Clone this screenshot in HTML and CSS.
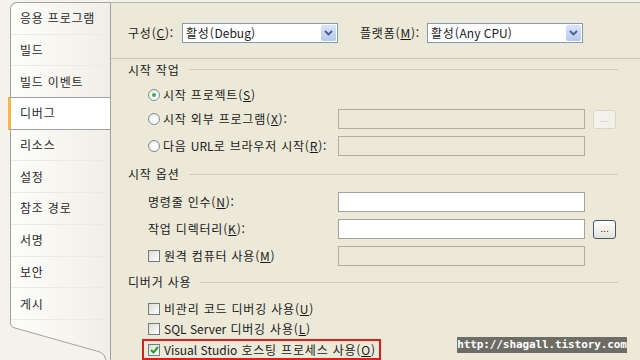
FILE: index.html
```html
<!DOCTYPE html>
<html lang="ko">
<head>
<meta charset="utf-8">
<title>디버그 속성</title>
<link rel="stylesheet" href="styles.css">
</head>
<body>
<div class="screen">
  <nav class="tabs">
    <ul class="tab-list">
      <li class="tab">응용 프로그램</li>
      <li class="tab">빌드</li>
      <li class="tab">빌드 이벤트</li>
      <li class="tab active">디버그</li>
      <li class="tab">리소스</li>
      <li class="tab">설정</li>
      <li class="tab">참조 경로</li>
      <li class="tab">서명</li>
      <li class="tab">보안</li>
      <li class="tab">게시</li>
    </ul>
    <svg class="tab-end" width="100" height="40" viewBox="0 0 100 40">
      <defs>
        <linearGradient id="tg" x1="0" y1="0" x2="1" y2="0">
          <stop offset="0" stop-color="#fdfdfb"/>
          <stop offset="1" stop-color="#f0eee6"/>
        </linearGradient>
      </defs>
      <path d="M0 0 H100 V40 H96 Q95 34 90 32 L5 8 Q0.5 7 0.5 3 Z" fill="url(#tg)"/>
      <path d="M0.5 0 V3 Q0.5 7 5 8 L90 32 Q95 34 96 40" fill="none" stroke="#a3a3a0" stroke-width="1"/>
    </svg>
  </nav>
  <main class="panel">
    <div class="config-row">
      <span class="cfg-label">구성(<u>C</u>):</span>
      <div class="combo"><span>활성(<span class="lat">Debug</span>)</span><span class="drop"><svg width="9" height="6" viewBox="0 0 9 6"><path d="M1 1 L4.5 4.5 L8 1" fill="none" stroke="#4a5d86" stroke-width="1.8"/></svg></span></div>
      <span class="cfg-label plat">플랫폼(<u>M</u>):</span>
      <div class="combo"><span>활성(<span class="lat">Any CPU</span>)</span><span class="drop"><svg width="9" height="6" viewBox="0 0 9 6"><path d="M1 1 L4.5 4.5 L8 1" fill="none" stroke="#4a5d86" stroke-width="1.8"/></svg></span></div>
    </div>
    <div class="sep"></div>

    <div class="group g1"><span>시작 작업</span><span class="rule"></span></div>
    <div class="row r-start"><span class="radio on"></span><span>시작 프로젝트(<u>S</u>)</span></div>
    <div class="row r-ext">
      <span class="lab"><span class="radio"></span><span>시작 외부 프로그램(<u>X</u>):</span></span>
      <span class="field off"></span><span class="dots off">...</span>
    </div>
    <div class="row r-url">
      <span class="lab"><span class="radio"></span><span>다음 <span class="lat">URL</span>로 브라우저 시작(<u>R</u>):</span></span>
      <span class="field off"></span>
    </div>

    <div class="group g2"><span>시작 옵션</span><span class="rule"></span></div>
    <div class="row r-args">
      <span class="lab">명령줄 인수(<u>N</u>):</span>
      <span class="field"></span>
    </div>
    <div class="row r-dir">
      <span class="lab">작업 디렉터리(<u>K</u>):</span>
      <span class="field"></span><span class="dots">...</span>
    </div>
    <div class="row r-remote">
      <span class="lab"><span class="check"></span><span>원격 컴퓨터 사용(<u>M</u>)</span></span>
      <span class="field off"></span>
    </div>

    <div class="group g3"><span>디버거 사용</span><span class="rule"></span></div>
    <div class="row r-cb1"><span class="check"></span><span>비관리 코드 디버깅 사용(<u>U</u>)</span></div>
    <div class="row r-cb2"><span class="check"></span><span><span class="lat">SQL Server</span> 디버깅 사용(<u>L</u>)</span></div>
    <div class="hilite">
      <span class="check on"><svg width="9" height="8" viewBox="0 0 9 8"><path d="M1 4 L3.5 6.5 L8 1" fill="none" stroke="#21a121" stroke-width="2"/></svg></span>
      <span><span class="lat">Visual Studio</span> 호스팅 프로세스 사용(<u>O</u>)</span>
    </div>
  </main>
  <div class="watermark">http://shagall.tistory.com</div>
</div>
</body>
</html>
```
FILE: styles.css
```css
html, body {
  margin: 0;
  padding: 0;
}
body {
  width: 640px;
  height: 360px;
  overflow: hidden;
  background: #f4f2ea;
  font-family: "Noto Sans CJK KR", "Noto Sans", sans-serif;
  font-size: 12px;
  color: #1a1a1a;
  letter-spacing: 0.8px;
}
u { text-decoration: underline; text-underline-offset: 1px; }
.lat { letter-spacing: 0; }

.screen {
  position: relative;
  display: flex;
  height: 360px;
  padding-top: 2px;
  box-sizing: border-box;
}

/* left tab strip */
.tabs {
  width: 100px;
  margin-left: 10px;
  display: flex;
  flex-direction: column;
}
.tab-list {
  list-style: none;
  margin: 0;
  padding: 0;
  background: linear-gradient(to right, #fdfdfb, #f0eee6);
  border-left: 1px solid #a3a3a0;
  border-top: 1px solid #a3a3a0;
  border-top-left-radius: 7px;
}
.tab {
  height: 31.7px;
  box-sizing: border-box;
  display: flex;
  align-items: center;
  padding-left: 9px;
  border-bottom: 1px solid #eceae2;
  line-height: 14px;
  color: #2a2a2a;
}
.tab.active {
  background: #fff;
  border-top: 1px solid #a0a0a0;
  border-bottom: 1px solid #a0a0a0;
  border-left: 3px solid #f2b84c;
  margin-left: -3px;
  margin-top: -1px;
  height: 32.7px;
  padding-left: 9px;
}
.tab-end { display: block; }

/* main panel */
.panel {
  flex: 1;
  background: #ece9d8;
  border-left: 1px solid #a0a0a0;
  border-top: 1px solid #b4b4b0;
  padding: 0 22px 0 17px;
  display: flex;
  flex-direction: column;
  align-items: flex-start;
}
.config-row {
  margin-top: 20px;
  height: 20px;
  display: flex;
  align-items: center;
}
.cfg-label { width: 54px; line-height: 14px; white-space: nowrap; }
.cfg-label.plat { width: 67px; margin-left: 22px; }
.combo {
  width: 156px;
  height: 20px;
  box-sizing: border-box;
  border: 1px solid #7f9db9;
  background: #fff;
  display: flex;
  align-items: center;
  padding-left: 3px;
  line-height: 14px;
}
.drop {
  margin-left: auto;
  margin-right: 1px;
  width: 15px;
  height: 16px;
  border-radius: 2px;
  background: linear-gradient(#dbe4fb, #b8c8ef);
  display: flex;
  align-items: center;
  justify-content: center;
}
.drop svg { display: block; }

.sep {
  align-self: stretch;
  margin: 15px -22px 0 -17px;
  height: 1px;
  background: #c9c6b6;
}

.group {
  align-self: stretch;
  height: 14px;
  line-height: 14px;
  display: flex;
  align-items: center;
}
.group .rule {
  flex: 1;
  height: 1px;
  background: #cfccbc;
  margin-left: 9px;
}
.g1 { margin-top: 4px; }
.g2 { margin-top: 11px; }
.g3 { margin-top: 9px; }

.row {
  display: flex;
  align-items: center;
  height: 20px;
  margin-left: 20px;
  line-height: 14px;
  white-space: nowrap;
}
.lab {
  width: 190px;
  display: flex;
  align-items: center;
}
.r-start { margin-top: 8px; }
.r-ext { margin-top: 5px; }
.r-url { margin-top: 7px; }
.r-args { margin-top: 11px; }
.r-dir { margin-top: 7px; }
.r-remote { margin-top: 7px; }
.r-cb1 { margin-top: 11px; height: 18px; }
.r-cb2 { margin-top: 2px; height: 18px; }

.radio {
  width: 12px;
  height: 12px;
  box-sizing: border-box;
  border-radius: 50%;
  border: 1px solid #7e8fa2;
  background: radial-gradient(circle at 60% 60%, #ffffff 30%, #dedcd2 100%);
  margin-right: 3px;
  display: inline-flex;
  align-items: center;
  justify-content: center;
  flex: none;
}
.radio.on::after {
  content: "";
  width: 4px;
  height: 4px;
  border-radius: 50%;
  background: #3dae45;
}
.check {
  width: 12px;
  height: 12px;
  box-sizing: border-box;
  border: 1px solid #6e7c8c;
  background: linear-gradient(135deg, #dcdbd2, #ffffff);
  margin-right: 4px;
  display: inline-flex;
  align-items: center;
  justify-content: center;
  flex: none;
}
.check svg { display: block; }

.field {
  width: 247px;
  height: 20px;
  box-sizing: border-box;
  border: 1px solid #a3a39b;
  background: #fff;
}
.field.off {
  background: #ece9d8;
  border-color: #aeaca3;
}
.dots {
  width: 23px;
  height: 19px;
  box-sizing: border-box;
  margin-left: 8px;
  border: 1px solid #43586f;
  border-radius: 3px;
  background: linear-gradient(#ffffff, #e4e2d8);
  font-family: "DejaVu Sans", sans-serif;
  font-size: 9px;
  letter-spacing: 0;
  line-height: 17px;
  text-align: center;
  color: #222;
}
.dots.off {
  border-color: #d9d6c9;
  background: #f3f1ea;
  color: #b6b4aa;
}

.hilite {
  margin-top: 2px;
  margin-left: 14px;
  height: 21px;
  box-sizing: border-box;
  border: 2px solid #e31b1b;
  padding: 0 3px 0 4px;
  display: flex;
  align-items: center;
  line-height: 14px;
  white-space: nowrap;
}

.watermark {
  position: absolute;
  left: 457px;
  top: 337px;
  width: 170px;
  height: 16px;
  background: #6d6d65;
  color: #fff;
  font-family: "DejaVu Sans Mono", monospace;
  font-weight: bold;
  font-size: 11px;
  line-height: 16px;
  text-align: center;
  letter-spacing: -0.1px;
}
```
